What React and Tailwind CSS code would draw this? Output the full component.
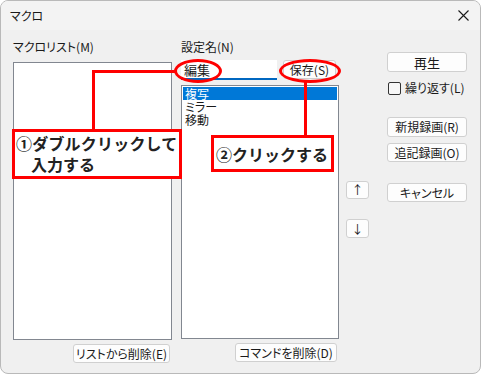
import React from 'react';

const ui = "font-['Noto_Sans_CJK_JP','Noto_Sans',sans-serif] [font-feature-settings:'palt']";

function Btn({ className = '', children }) {
  return (
    <div
      className={`flex items-center justify-center rounded-[3px] border border-[#d0d0d0] bg-[#fdfdfd] text-[12px] leading-none text-[#1a1a1a] ${className}`}
    >
      {children}
    </div>
  );
}

function App() {
  return (
    <div className={`relative h-[375px] w-[481px] overflow-hidden bg-white ${ui}`}>
      <div className="flex h-[374px] w-[481px] flex-col overflow-hidden rounded-[8px] border border-[#b9b9b9] bg-[#f0f0f0] text-[12px] text-[#1a1a1a]">
        {/* title bar */}
        <div className="flex h-[29px] items-center justify-between bg-[#f3f3f3] pl-[9px] pr-[11px]">
          <span className="text-[12px]">マクロ</span>
          <svg width="11" height="11" viewBox="0 0 11 11">
            <path d="M0.5 0.5 L10.5 10.5 M10.5 0.5 L0.5 10.5" stroke="#1a1a1a" strokeWidth="1.1" fill="none" />
          </svg>
        </div>

        {/* body */}
        <div className="flex pl-[12px] pt-[10px]">
          {/* macro list */}
          <div className="flex w-[159px] flex-col">
            <div className="h-[14px] leading-[14px]">マクロリスト(M)</div>
            <div className="mt-[8px] h-[278px] border border-[#828790] bg-white" />
            <div className="mt-[4px] flex justify-end pr-[2px]">
              <Btn className="h-[19px] w-[97px]">リストから削除(E)</Btn>
            </div>
          </div>

          {/* setting name */}
          <div className="ml-[9px] flex w-[158px] flex-col">
            <div className="h-[14px] leading-[14px]">設定名(N)</div>
            <div className="mt-[6px] flex h-[20px]">
              <div className="w-[96px] border-b-2 border-[#0067c0] bg-white pl-[3px] text-[13px] leading-[19px]">編集</div>
              <Btn className="ml-[6px] h-[19px] w-[53px]">保存(S)</Btn>
            </div>
            <div className="mt-[5px] h-[254px] border border-[#828790] bg-white pl-px pr-px pt-[1px] text-[12px] leading-[13px]">
              <div className="bg-[#0078d7] pl-[2px] text-white">複写</div>
              <div className="pl-[2px]">ミラー</div>
              <div className="pl-[2px]">移動</div>
            </div>
            <div className="mt-[4px] flex justify-end pr-[2px]">
              <Btn className="h-[19px] w-[102px]">コマンドを削除(D)</Btn>
            </div>
          </div>

          {/* arrows */}
          <div className="ml-[7px] flex w-[23px] flex-col pt-[141px]">
            <Btn className="h-[18px] w-[23px] text-[10px]">↑</Btn>
            <Btn className="mt-[20px] h-[19px] w-[23px] text-[10px]">↓</Btn>
          </div>

          {/* buttons */}
          <div className="ml-[18px] flex w-[80px] flex-col pt-[12px]">
            <Btn className="h-[20px] w-[80px] border-[#0067c0] text-[13px]">再生</Btn>
            <div className="mt-[9px] flex h-[14px] items-center gap-[4px] pl-px">
              <div className="h-[13px] w-[13px] rounded-[2px] border border-[#333] bg-[#f7f7f7]" />
              <span className="leading-[14px]">繰り返す(L)</span>
            </div>
            <Btn className="mt-[22px] h-[20px] w-[80px]">新規録画(R)</Btn>
            <Btn className="mt-[6px] h-[19px] w-[80px]">追記録画(O)</Btn>
            <Btn className="mt-[21px] h-[19px] w-[80px]">キャンセル</Btn>
          </div>
        </div>
      </div>

      {/* annotations */}
      <div className="absolute left-[174px] top-[59px] h-[24px] w-[48px] rounded-[50%] border-[3px] border-[#ff0000]" />
      <div className="absolute left-[279px] top-[59px] h-[24px] w-[62px] rounded-[50%] border-[3px] border-[#ff0000]" />
      <div className="absolute left-[92px] top-[70px] h-[3px] w-[83px] bg-[#ff0000]" />
      <div className="absolute left-[92px] top-[70px] h-[60px] w-[3px] bg-[#ff0000]" />
      <div className="absolute left-[304px] top-[82px] h-[54px] w-[3px] bg-[#ff0000]" />

      <div className="absolute left-[12px] top-[129px] h-[50px] w-[170px] border-[3px] border-[#ff0000] bg-white pl-[1px] pt-[1px] font-bold text-[16px] leading-[21px] text-[#222] [font-feature-settings:normal]">
        <div className="tracking-[0.2px]">①ダブルクリックして</div>
        <div className="pl-[15px]">入力する</div>
      </div>
      <div className="absolute left-[211px] top-[135px] flex h-[37px] w-[123px] items-center border-[3px] border-[#ff0000] bg-white pl-[2px] font-bold text-[16px] leading-none text-[#222] [font-feature-settings:normal]">
        ②クリックする
      </div>
    </div>
  );
}

export default App;
